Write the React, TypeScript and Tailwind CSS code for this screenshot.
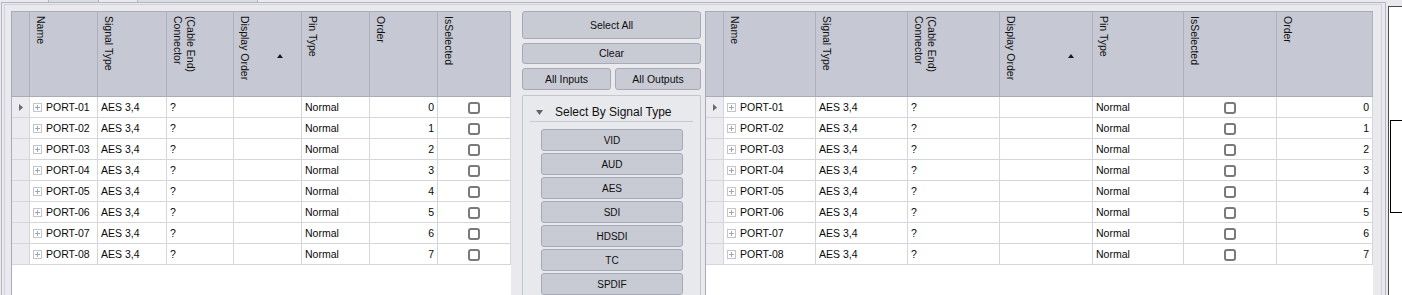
import React from "react";

type Col = {
  key: string;
  label: string[];
  w: string;
  sort?: boolean;
};

const leftCols: Col[] = [
  { key: "name", label: ["Name"], w: "w-[68px]" },
  { key: "signal", label: ["Signal Type"], w: "w-[69px]" },
  { key: "conn", label: ["(Cable End)", "Connector"], w: "w-[67px]" },
  { key: "disp", label: ["Display Order"], w: "w-[68px]", sort: true },
  { key: "pin", label: ["Pin Type"], w: "w-[68px]" },
  { key: "order", label: ["Order"], w: "w-[68px]" },
  { key: "sel", label: ["IsSelected"], w: "w-[73px]" },
];

const rightCols: Col[] = [
  { key: "name", label: ["Name"], w: "w-[92px]" },
  { key: "signal", label: ["Signal Type"], w: "w-[92px]" },
  { key: "conn", label: ["(Cable End)", "Connector"], w: "w-[92px]" },
  { key: "disp", label: ["Display Order"], w: "w-[93px]", sort: true },
  { key: "pin", label: ["Pin Type"], w: "w-[91px]" },
  { key: "sel", label: ["IsSelected"], w: "w-[93px]" },
  { key: "order", label: ["Order"], w: "w-[96px]" },
];

const rows = Array.from({ length: 8 }, (_, i) => ({
  name: `PORT-0${i + 1}`,
  signal: "AES 3,4",
  conn: "?",
  disp: "",
  pin: "Normal",
  order: String(i),
}));

const signalTypes = ["VID", "AUD", "AES", "SDI", "HDSDI", "TC", "SPDIF"];

function ExpandBox() {
  return (
    <svg width="9" height="9" viewBox="0 0 9 9" className="shrink-0">
      <rect x="0.5" y="0.5" width="8" height="8" fill="#ffffff" stroke="#c3c5cd" />
      <line x1="2" y1="4.5" x2="7" y2="4.5" stroke="#a3a5ae" />
      <line x1="4.5" y1="2" x2="4.5" y2="7" stroke="#a3a5ae" />
    </svg>
  );
}

function Checkbox() {
  return <div className="w-[12px] h-[12px] border-2 border-[#7a7a7a] rounded-[3px] bg-white" />;
}

function SortArrow() {
  return (
    <svg width="6" height="4" viewBox="0 0 6 4">
      <polygon points="0,4 3,0 6,4" fill="#1a1a1a" />
    </svg>
  );
}

function RowArrow() {
  return (
    <svg width="4" height="7" viewBox="0 0 4 7">
      <polygon points="0,0 4,3.5 0,7" fill="#6a6a6a" />
    </svg>
  );
}

function Grid({ cols, width }: { cols: Col[]; width: string }) {
  return (
    <div className={`${width} h-full shrink-0 flex flex-col border-l border-t border-[#a9acb8] bg-white`}>
      <div className="flex h-[85px] shrink-0 bg-[#c6c8d3] border-b border-[#a9acb8]">
        <div className="w-[18px] h-full border-r border-[#aeb1bd]" />
        {cols.map((c) => (
          <div key={c.key} className={`${c.w} h-full border-r border-[#aeb1bd] flex pl-[4px] pt-[4px]`}>
            <span className="[writing-mode:vertical-rl] leading-[13px] text-[10.5px] whitespace-nowrap text-[#111111]">
              {c.label.map((l, i) => (
                <React.Fragment key={i}>
                  {i > 0 && <br />}
                  {l}
                </React.Fragment>
              ))}
            </span>
            {c.sort && (
              <span className="ml-auto mr-[18px] self-center flex">
                <SortArrow />
              </span>
            )}
          </div>
        ))}
      </div>
      {rows.map((r, ri) => (
        <div key={r.name} className="flex h-[21px] shrink-0 text-[10.5px] text-[#0a0a0a]">
          <div className="w-[18px] h-full bg-[#ececf0] border-r border-b border-[#d5d6dc] flex items-center pl-[7px]">
            {ri === 0 && <RowArrow />}
          </div>
          {cols.map((c) => {
            const base = `${c.w} h-full border-r border-b border-[#d5d6dc] flex items-center pt-[1px]`;
            if (c.key === "name")
              return (
                <div key={c.key} className={`${base} pl-[3px]`}>
                  <ExpandBox />
                  <span className="ml-[4px] whitespace-nowrap">{r.name}</span>
                </div>
              );
            if (c.key === "sel")
              return (
                <div key={c.key} className={`${base} justify-center`}>
                  <Checkbox />
                </div>
              );
            if (c.key === "order")
              return (
                <div key={c.key} className={`${base} justify-end pr-[3px]`}>
                  {r.order}
                </div>
              );
            return (
              <div key={c.key} className={`${base} pl-[3px] whitespace-nowrap`}>
                {(r as Record<string, string>)[c.key]}
              </div>
            );
          })}
        </div>
      ))}
      <div className="flex-1 bg-white" />
    </div>
  );
}

function Btn({ children, cls }: { children: React.ReactNode; cls: string }) {
  return (
    <div
      className={`${cls} flex items-center justify-center bg-[#c8cad4] border border-[#a7aab6] rounded-[3px] text-[10.5px] text-[#0f0f0f]`}
    >
      {children}
    </div>
  );
}

function CenterPanel() {
  return (
    <div className="w-[194px] h-full shrink-0 flex flex-col pl-[11px] pr-[4px] bg-[#e9e9ee]">
      <Btn cls="h-[29px] pt-[1px]">Select All</Btn>
      <Btn cls="h-[22px] mt-[4px] pt-[1px]">Clear</Btn>
      <div className="flex mt-[4px]">
        <Btn cls="h-[22px] w-[89px] pt-[1px]">All Inputs</Btn>
        <Btn cls="h-[22px] flex-1 ml-[4px] pt-[1px]">All Outputs</Btn>
      </div>
      <div className="flex-1 mt-[5px] border-l border-t border-r border-[#c4c6cf] rounded-t-[2px] bg-[#e8e9ed] flex flex-col">
        <div className="mx-[7px] pt-[9px] pb-[2px] border-b border-[#c6c8d0] flex items-center h-[26px]">
          <svg width="7" height="5" viewBox="0 0 7 5" className="ml-[6px]">
            <polygon points="0,0 7,0 3.5,5" fill="#636363" />
          </svg>
          <span className="ml-[12px] text-[12px] leading-[14px] text-[#111111] whitespace-nowrap">
            Select By Signal Type
          </span>
        </div>
        <div className="flex flex-col gap-[2px] pt-[7px] ml-[18px] mr-[17px]">
          {signalTypes.map((s) => (
            <Btn key={s} cls="h-[22px] pt-[1px]">
              <span className="text-[10px]">{s}</span>
            </Btn>
          ))}
        </div>
      </div>
    </div>
  );
}

export default function App() {
  return (
    <div className="w-[1402px] h-[295px] overflow-hidden bg-[#e9e9ee] flex flex-col font-['Liberation_Sans',Arial,sans-serif]">
      <div className="h-[2px] shrink-0 flex">
        <div className="w-[49px] h-full border-r border-[#b4b6c0]" />
        <div className="w-[50px] h-full border-r border-[#b4b6c0] bg-[#dcdde3]" />
        <div className="w-[39px] h-full border-r border-[#b4b6c0]" />
        <div className="w-[120px] h-full border-r border-[#b4b6c0] bg-[#dcdde3]" />
        <div className="flex-1 h-full" />
      </div>
      <div className="flex flex-1 min-h-0">
        <div className="ml-[1px] w-[1385px] h-full shrink-0 border-l border-t border-r border-[#b3b5c0] flex flex-col">
          <div className="ml-[2px] mr-[3px] mt-[1px] flex-1 min-h-0 border-l border-t border-r border-[#cfd1d9] pl-[6px] pt-[6px] pr-[8px] flex">
            <Grid cols={leftCols} width="w-[500px]" />
            <CenterPanel />
            <Grid cols={rightCols} width="w-[668px]" />
          </div>
        </div>
        <div className="ml-[2px] flex-1 mt-[4px] bg-white border-l border-t border-[#4a4a4a] flex flex-col">
          <div className="mt-[113px] ml-[1px] h-[93px] border-l border-t border-b border-black" />
        </div>
      </div>
    </div>
  );
}
